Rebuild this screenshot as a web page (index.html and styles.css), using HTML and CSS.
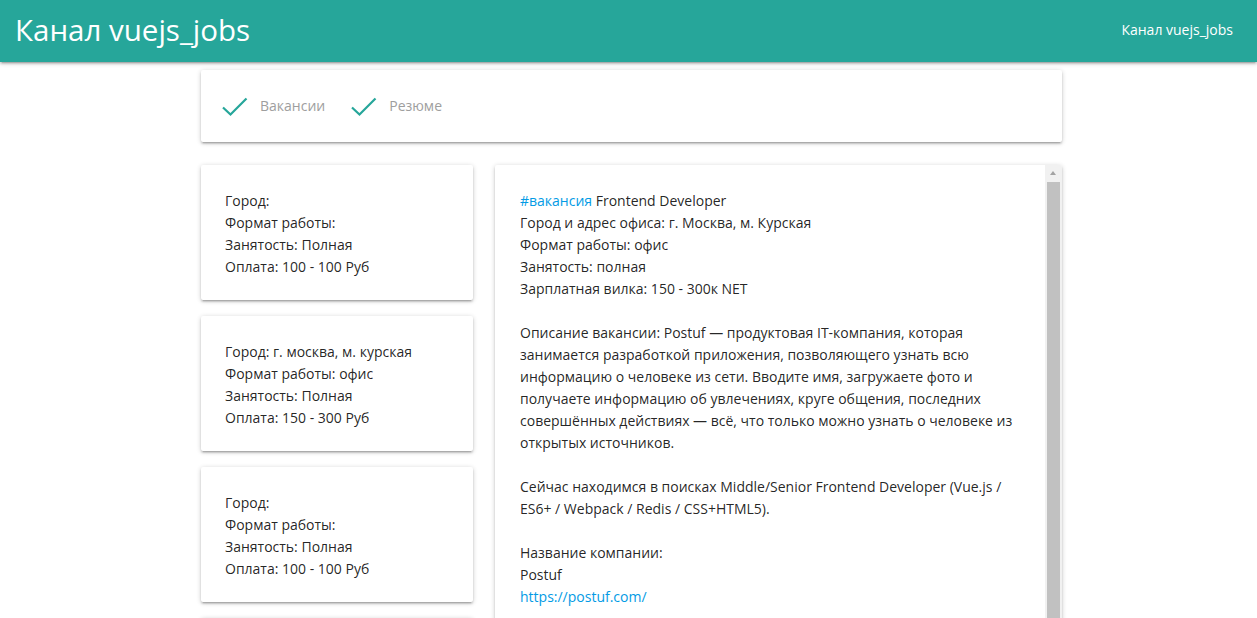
FILE: index.html
```html
<!DOCTYPE html>
<html lang="ru">
<head>
<meta charset="utf-8">
<title>Канал vuejs_jobs</title>
<link rel="stylesheet" href="styles.css">
</head>
<body>
<header class="nav">
  <a class="brand" href="#">Канал vuejs_jobs</a>
  <a class="nav-link" href="#">Канал vuejs_jobs</a>
</header>
<main class="container">
  <section class="card filters">
    <label class="filter">
      <svg class="check" width="26" height="20" viewBox="0 0 26 20"><path d="M1 10.5 L8.5 17.5 L24.5 1.5" fill="none" stroke="#26a69a" stroke-width="2.2"/></svg>
      <span>Вакансии</span>
    </label>
    <label class="filter">
      <svg class="check" width="26" height="20" viewBox="0 0 26 20"><path d="M1 10.5 L8.5 17.5 L24.5 1.5" fill="none" stroke="#26a69a" stroke-width="2.2"/></svg>
      <span>Резюме</span>
    </label>
  </section>
  <div class="columns">
    <div class="list">
      <article class="card item">
        <p>Город: <br>Формат работы: <br>Занятость: Полная<br>Оплата: 100 - 100 Руб</p>
      </article>
      <article class="card item">
        <p>Город: г. москва, м. курская<br>Формат работы: офис<br>Занятость: Полная<br>Оплата: 150 - 300 Руб</p>
      </article>
      <article class="card item">
        <p>Город: <br>Формат работы: <br>Занятость: Полная<br>Оплата: 100 - 100 Руб</p>
      </article>
      <article class="card item">
        <p>Город: <br>Формат работы: <br>Занятость: Полная<br>Оплата: 100 - 100 Руб</p>
      </article>
    </div>
    <div class="card detail">
      <div class="detail-body">
        <p><a href="#">#вакансия</a> Frontend Developer<br>Город и адрес офиса: г. Москва, м. Курская<br>Формат работы: офис<br>Занятость: полная<br>Зарплатная вилка: 150 - 300к NET</p>
        <p>Описание вакансии: Postuf — продуктовая IT-компания, которая занимается разработкой приложения, позволяющего узнать всю информацию о человеке из сети. Вводите имя, загружаете фото и получаете информацию об увлечениях, круге общения, последних совершённых действиях — всё, что только можно узнать о человеке из открытых источников.</p>
        <p>Сейчас находимся в поисках Middle/Senior Frontend Developer (Vue.js / ES6+ / Webpack / Redis / CSS+HTML5).</p>
        <p>Название компании:<br>Postuf<br><a href="#">https://postuf.com/</a></p>
      </div>
      <div class="scrollbar">
        <div class="sb-arrow"></div>
        <div class="sb-thumb"></div>
      </div>
    </div>
  </div>
</main>
</body>
</html>
```
FILE: styles.css
```css
* { box-sizing: border-box; }
html, body { margin: 0; padding: 0; }
body {
  font-family: "Open Sans", "Noto Sans", sans-serif;
  font-size: 14px;
  line-height: 22px;
  color: rgba(0,0,0,0.87);
  background: #fff;
  overflow: hidden;
  height: 618px;
}
a { text-decoration: none; color: #039be5; }
p { margin: 0; }

.nav {
  height: 62px;
  background: #26a69a;
  display: flex;
  align-items: center;
  justify-content: space-between;
  box-shadow: 0 2px 2px 0 rgba(0,0,0,0.14), 0 3px 1px -2px rgba(0,0,0,0.12), 0 1px 5px 0 rgba(0,0,0,0.2);
  position: relative;
  z-index: 2;
}
.brand {
  color: #fff;
  font-size: 29.5px;
  padding-left: 15px;
  margin-top: -3px;
}
.nav-link {
  color: #fff;
  font-size: 14px;
  padding-right: 24px;
  margin-top: -2px;
}

.container {
  width: 861px;
  margin: 8px auto 0;
  position: relative;
  left: 3px;
}
.card {
  background: #fff;
  border-radius: 2px;
  box-shadow: 0 2px 2px 0 rgba(0,0,0,0.14), 0 3px 1px -2px rgba(0,0,0,0.12), 0 1px 5px 0 rgba(0,0,0,0.2);
}
.filters {
  height: 72px;
  display: flex;
  align-items: center;
  padding-left: 21px;
  gap: 26px;
}
.filter {
  display: flex;
  align-items: center;
  color: #9e9e9e;
  font-size: 14px;
}
.check { margin-right: 12px; margin-top: 1px; }

.columns {
  display: flex;
  gap: 22px;
  margin-top: 23px;
  align-items: flex-start;
}
.list {
  width: 272px;
  flex: none;
  display: flex;
  flex-direction: column;
  gap: 16px;
}
.item { padding: 25px 24px 23px; height: 135px; }

.detail {
  flex: 1;
  height: 640px;
  display: flex;
  overflow: hidden;
}
.detail-body {
  flex: 1;
  padding: 25px 24px 24px 25px;
}
.detail-body p + p { margin-top: 22px; }

.scrollbar {
  width: 17px;
  flex: none;
  background: #f1f1f1;
  display: flex;
  flex-direction: column;
  align-items: center;
}
.sb-arrow {
  height: 17px;
  width: 17px;
  position: relative;
}
.sb-arrow::after {
  content: "";
  position: absolute;
  left: 5px;
  top: 6px;
  border-left: 3.5px solid transparent;
  border-right: 3.5px solid transparent;
  border-bottom: 4px solid #a3a3a3;
}
.sb-thumb {
  width: 13px;
  flex: 1;
  background: #c1c1c1;
}
```
